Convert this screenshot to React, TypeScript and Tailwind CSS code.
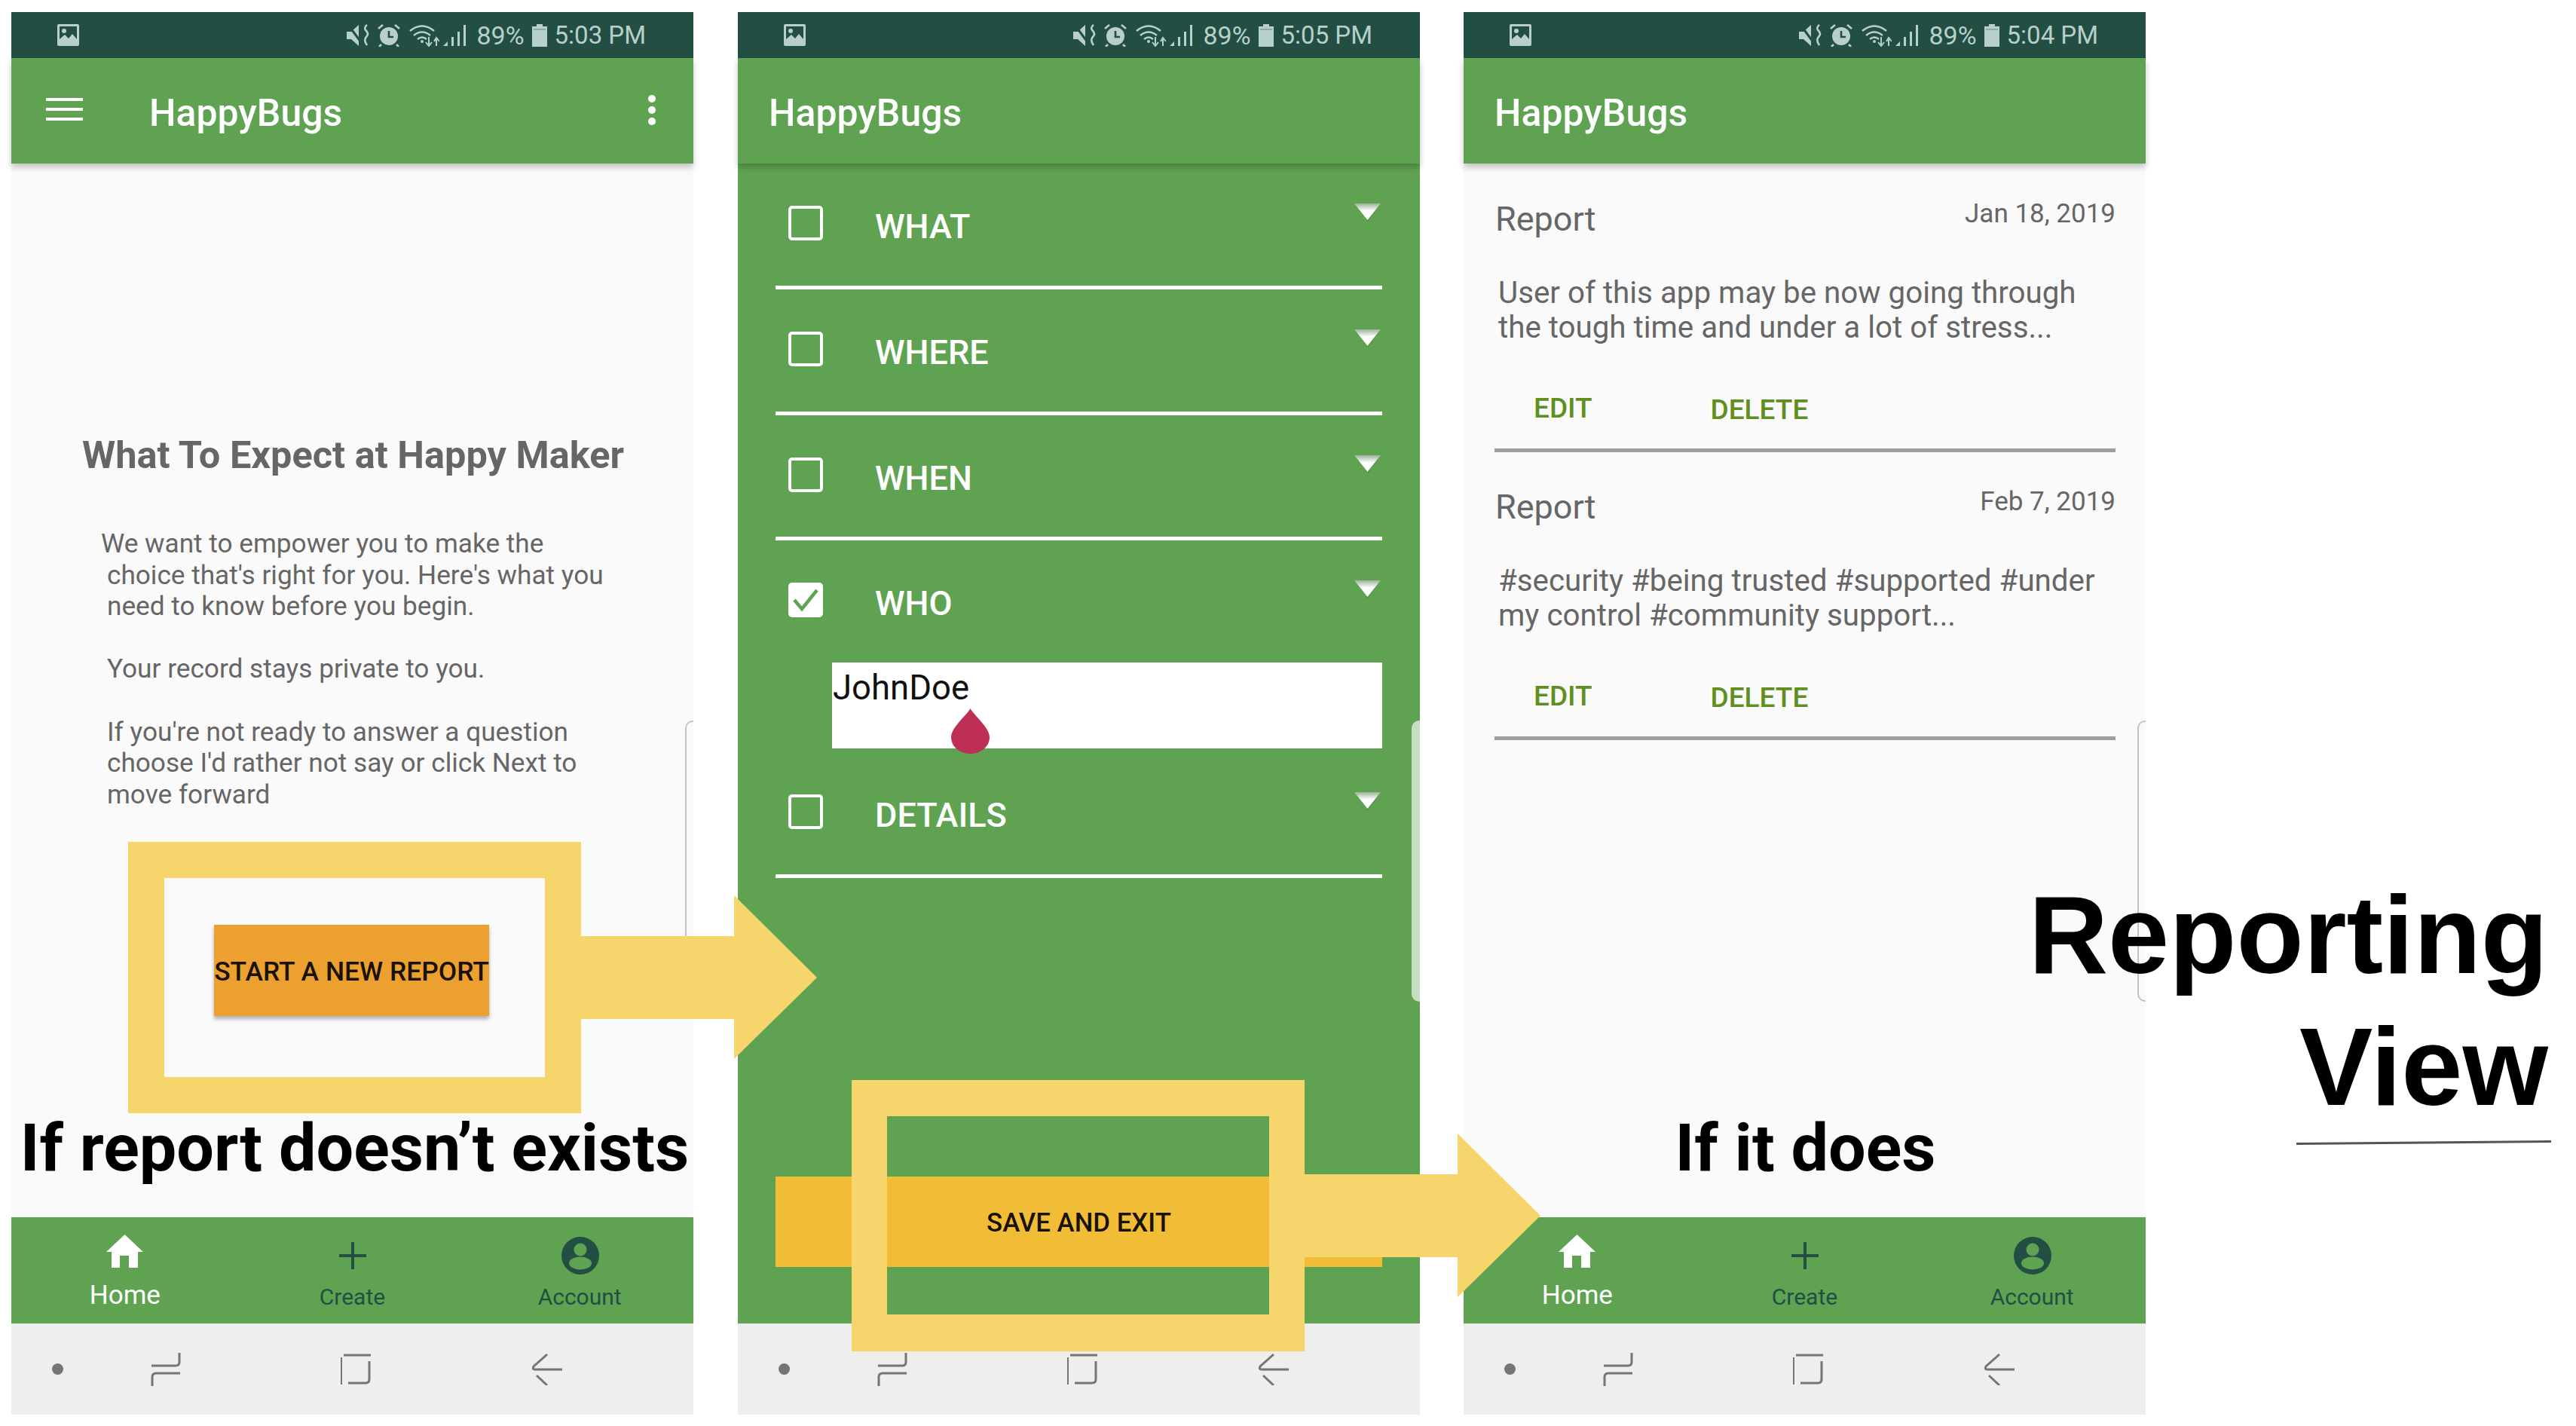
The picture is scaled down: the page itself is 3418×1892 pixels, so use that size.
import type { ReactNode } from 'react';

const GREEN = 'bg-[#5FA352]';

function PictureIcon() {
  return (
    <svg width="29" height="29" viewBox="0 0 29 29">
      <rect width="29" height="29" rx="2" fill="#B9CFCA" />
      <rect x="3" y="3" width="23" height="23" fill="#224E44" />
      <circle cx="9" cy="9" r="3" fill="#B9CFCA" />
      <path d="M3 26 V20 L10 14 L15 19 L20 13 L26 20 V26 Z" fill="#B9CFCA" />
    </svg>
  );
}

function MuteIcon() {
  return (
    <svg width="31" height="29" viewBox="0 0 31 29">
      <path d="M0 10 H6 L16 1 V29 L6 20 H0 Z" fill="#B9CFCA" />
      <path d="M2 1 L22 28" stroke="#224E44" strokeWidth="3" />
      <path d="M27 1 Q22 5 26 9 Q30 13 26 17 Q22 21 27 28" fill="none" stroke="#B9CFCA" strokeWidth="2.6" />
    </svg>
  );
}

function AlarmIcon() {
  return (
    <svg width="30" height="30" viewBox="0 0 30 30">
      <circle cx="15" cy="16" r="12" fill="#B9CFCA" />
      <path d="M15 9 V17 H21" fill="none" stroke="#224E44" strokeWidth="2.6" />
      <path d="M1 6 L7 1 M29 6 L23 1 M5 27 L2 30 M25 27 L28 30" stroke="#B9CFCA" strokeWidth="2.6" />
    </svg>
  );
}

function WifiIcon() {
  return (
    <svg width="40" height="30" viewBox="0 0 40 30">
      <path d="M1 9 Q17 -4 33 9 M6 15 Q17 6 28 15 M11 20 Q17 15 23 20" fill="none" stroke="#B9CFCA" strokeWidth="2.6" />
      <circle cx="17" cy="23" r="2" fill="#B9CFCA" />
      <path d="M26 17 V27 M22 24 L26 29 L30 24 M36 29 V20 M33 23 L36 18 L40 23" fill="none" stroke="#B9CFCA" strokeWidth="2" />
    </svg>
  );
}

function SignalIcon() {
  return (
    <svg width="30" height="30" viewBox="0 0 30 30">
      <path d="M0 29 L6 23 V29 Z M11 17 H14 V29 H11 Z M19 10 H22 V29 H19 Z M27 1 H30 V29 H27 Z" fill="#B9CFCA" />
    </svg>
  );
}

function BatteryIcon() {
  return (
    <svg width="20" height="30" viewBox="0 0 20 30">
      <path d="M6 0 H14 V3 H20 V30 H0 V3 H6 Z" fill="#B9CFCA" />
      <rect x="2" y="6" width="16" height="2" fill="#8FA9A3" />
    </svg>
  );
}

function StatusBar({ time }: { time: string }) {
  return (
    <div className="h-[61px] bg-[#224E44] flex items-center pl-[61px] pr-[63px] text-[34px] leading-none text-[#B9CFCA]">
      <PictureIcon />
      <div className="ml-auto flex items-center">
        <MuteIcon />
        <div className="ml-[10px]"><AlarmIcon /></div>
        <div className="ml-[12px]"><WifiIcon /></div>
        <div className="ml-[5px]"><SignalIcon /></div>
        <span className="ml-[14px]">89%</span>
        <div className="ml-[10px]"><BatteryIcon /></div>
        <span className="ml-[10px] text-[33px]">{time}</span>
      </div>
    </div>
  );
}

function AppBar({ menu }: { menu?: boolean }) {
  return (
    <div className={`relative z-10 h-[140px] ${GREEN} flex items-center shadow-[0_5px_8px_rgba(0,0,0,0.22)] ${menu ? 'pl-[46px]' : 'pl-[41px]'}`}>
      {menu && (
        <div className="flex flex-col gap-[9px] w-[49px] mr-[88px] -mt-[4px]">
          <div className="h-[4px] bg-white" />
          <div className="h-[4px] bg-white" />
          <div className="h-[4px] bg-white" />
        </div>
      )}
      <span className="text-[50px] leading-none font-medium text-white mt-[6px]">HappyBugs</span>
      {menu && (
        <div className="ml-auto mr-[50px] flex flex-col gap-[5px] -mt-[3px]">
          <div className="w-[10px] h-[10px] rounded-full bg-white" />
          <div className="w-[10px] h-[10px] rounded-full bg-white" />
          <div className="w-[10px] h-[10px] rounded-full bg-white" />
        </div>
      )}
    </div>
  );
}

function BottomNav() {
  return (
    <div className={`h-[141px] ${GREEN} grid grid-cols-3 pt-[26px]`}>
      <div className="flex flex-col items-center text-white">
        <div className="h-[50px] flex items-start">
          <svg width="49" height="44" viewBox="0 0 49 44" className="-mt-[3px]">
            <path d="M24.5 0 L49 23 H42 V44 H30 V28 H18 V44 H7 V23 H0 Z" fill="white" />
          </svg>
        </div>
        <span className="text-[35px] leading-[40px] mt-[8px]">Home</span>
      </div>
      <div className="flex flex-col items-center text-[#224E44]">
        <div className="h-[50px] flex items-center">
          <svg width="36" height="36" viewBox="0 0 36 36" className="ml-[2px]">
            <path d="M18 0 V36 M0 18 H36" stroke="#224E44" strokeWidth="4" />
          </svg>
        </div>
        <span className="text-[30px] leading-[40px] mt-[10px]">Create</span>
      </div>
      <div className="flex flex-col items-center text-[#224E44]">
        <svg width="50" height="50" viewBox="0 0 50 50" className="ml-[2px]">
          <circle cx="25" cy="25" r="25" fill="#224E44" />
          <circle cx="25" cy="17" r="8.5" fill="#5FA352" />
          <ellipse cx="25" cy="35" rx="15" ry="8.5" fill="#5FA352" />
        </svg>
        <span className="text-[30px] leading-[40px] mt-[10px]">Account</span>
      </div>
    </div>
  );
}

function NavBar() {
  return (
    <div className="h-[121px] bg-[#EEEEEE] flex items-center">
      <div className="ml-[54px] w-[15px] h-[15px] rounded-full bg-[#757575]" />
      <svg width="40" height="44" viewBox="0 0 40 44" fill="none" stroke="#757575" strokeWidth="3" className="ml-[116px]">
        <path d="M38 0 V12 Q38 17 33 17 H1" />
        <path d="M39 27 H7 Q2 27 2 32 V44" />
      </svg>
      <svg width="40" height="42" viewBox="0 0 40 42" fill="none" stroke="#757575" strokeWidth="3" className="ml-[212px]">
        <path d="M1 5 V41" strokeWidth="2" />
        <path d="M4 2 H40" />
        <path d="M38 10 V34 Q38 39 33 39 H10" />
      </svg>
      <svg width="40" height="42" viewBox="0 0 40 42" fill="none" stroke="#757575" strokeWidth="3" className="ml-[214px]">
        <path d="M20 1 L2 17 Q0 21 4 21 H40" />
        <path d="M6 29 L20 42" />
      </svg>
    </div>
  );
}

function EdgeHandle({ tint, short }: { tint?: boolean; short?: boolean }) {
  return (
    <div
      className={`absolute right-0 top-[739px] w-[11px] ${short ? 'h-[300px] rounded-tl-[10px] border-b-0' : 'h-[373px] rounded-l-[10px]'} ${
        tint ? 'bg-[#C5DDC0]' : 'border-l-2 border-t-2 border-[#C4C4C4]'
      } ${!tint && !short ? 'border-b-2' : ''}`}
    />
  );
}

function Phone({ time, menu, nav, children }: { time: string; menu?: boolean; nav?: boolean; children: ReactNode }) {
  return (
    <div className="w-[905px] h-[1861px] flex flex-col shrink-0">
      <StatusBar time={time} />
      <AppBar menu={menu} />
      {children}
      {nav && <BottomNav />}
      <NavBar />
    </div>
  );
}

function Intro() {
  return (
    <div className="relative flex-1 bg-[#FAFAFA] text-[#666666] pt-[363px]">
      <h1 className="ml-[94px] text-[50.5px] leading-[48px] font-bold">What To Expect at Happy Maker</h1>
      <div className="mt-[73px] text-[35.2px] leading-[41.6px]">
        <p className="ml-[119px]">We want to empower you to make the</p>
        <p className="ml-[127px]">choice that's right for you. Here's what you</p>
        <p className="ml-[127px]">need to know before you begin.</p>
        <p className="ml-[127px] mt-[41.6px]">Your record stays private to you.</p>
        <p className="ml-[127px] mt-[41.6px]">If you're not ready to answer a question</p>
        <p className="ml-[127px]">choose I'd rather not say or click Next to</p>
        <p className="ml-[127px]">move forward</p>
      </div>
      <button className="block ml-[269px] mt-[152px] w-[365px] h-[121px] pt-[4px] bg-[#ECA02F] shadow-[0_4px_5px_rgba(0,0,0,0.3)] text-[35.4px] leading-none font-medium text-[#1A1209] whitespace-nowrap">
        START A NEW REPORT
      </button>
      <EdgeHandle short />
    </div>
  );
}

function Triangle() {
  return (
    <svg width="39" height="28" viewBox="0 0 39 28" className="block">
      <defs>
        <linearGradient id="tri" x1="0" y1="0" x2="0" y2="1">
          <stop offset="0" stopColor="#9DB39A" />
          <stop offset="0.45" stopColor="#FFFFFF" />
          <stop offset="1" stopColor="#FFFFFF" />
        </linearGradient>
      </defs>
      <path d="M4 3 L20 25 L36 3 Z" fill="#3E7A35" opacity="0.45" />
      <path d="M2 1 L19.5 23 L37 1 Z" fill="url(#tri)" />
    </svg>
  );
}

function CheckRow({ label, checked }: { label: string; checked?: boolean }) {
  return (
    <div className="flex items-start pt-[52px] h-[162px]">
      <div
        className={`ml-[17px] mt-[4px] w-[46px] h-[46px] shrink-0 rounded-[5px] flex items-center justify-center ${
          checked ? 'bg-white' : 'border-[4px] border-white'
        }`}
      >
        {checked && (
          <svg width="36" height="32" viewBox="0 0 36 32" fill="none" stroke="#5FA352" strokeWidth="4.5">
            <path d="M3 16 L13 28 L33 3" />
          </svg>
        )}
      </div>
      <span className="ml-[69px] mt-[9px] text-[45px] leading-[46px] font-medium text-white">{label}</span>
      <div className="ml-auto">
        <Triangle />
      </div>
    </div>
  );
}

function ReportForm() {
  return (
    <div className={`relative flex-1 ${GREEN} px-[50px]`}>
      <div className="h-[167px] border-b-[5px] border-white">
        <CheckRow label="WHAT" />
      </div>
      <div className="h-[167px] border-b-[5px] border-white">
        <CheckRow label="WHERE" />
      </div>
      <div className="h-[166px] border-b-[5px] border-white">
        <CheckRow label="WHEN" />
      </div>
      <div className="h-[281px]">
        <CheckRow label="WHO" checked />
        <div className="relative ml-[75px] h-[114px] bg-white text-[45.5px] leading-[52px] text-[#111111] pt-[8px]">
          <span className="ml-[1px]">JohnDoe</span>
          <svg width="51" height="60" viewBox="0 0 51 60" className="absolute left-[158px] top-[61px]">
            <path d="M25.5 0 C31 10 51 25 51 38 C51 51 39 60 25.5 60 C12 60 0 51 0 38 C0 25 20 10 25.5 0 Z" fill="#BE2F55" />
          </svg>
        </div>
      </div>
      <div className="h-[167px] border-b-[5px] border-white">
        <CheckRow label="DETAILS" />
      </div>
      <button className="block mt-[396px] w-[805px] h-[120px] pt-[2px] bg-[#F2BD36] text-[34.8px] leading-none font-medium text-[#1A1209]">
        SAVE AND EXIT
      </button>
      <EdgeHandle tint />
    </div>
  );
}

const reports = [
  {
    date: 'Jan 18, 2019',
    lines: ['User of this app may be now going through', 'the tough time and under a lot of stress...'],
  },
  {
    date: 'Feb 7, 2019',
    lines: ['#security #being trusted #supported #under', 'my control #community support...'],
  },
];

function ReportList() {
  return (
    <div className="relative flex-1 bg-[#FAFAFA] text-[#666666] pl-[41px] pr-[40px] pt-[1px]">
      {reports.map((r) => (
        <div key={r.date} className="h-[382px] pt-[49px] border-b-[5px] border-[#9E9E9E]">
          <div className="flex justify-between items-start">
            <span className="ml-[1px] mt-[2px] text-[45px] leading-[44px]">Report</span>
            <span className="text-[35px] leading-[34px]">{r.date}</span>
          </div>
          <div className="ml-[5px] mt-[53px] text-[40.3px] leading-[46px]">
            <p>{r.lines[0]}</p>
            <p>{r.lines[1]}</p>
          </div>
          <div className="flex items-start mt-[66px] text-[37px] leading-[36px] font-medium text-[#5F8F1F]">
            <span className="ml-[52px]">EDIT</span>
            <span className="ml-[157px] mt-[2px]">DELETE</span>
          </div>
        </div>
      ))}
      <EdgeHandle />
    </div>
  );
}

function Arrow({ className }: { className: string }) {
  return (
    <svg width="313" height="217" viewBox="0 0 313 217" className={`absolute z-20 ${className}`}>
      <path d="M0 54 H203 V0 L313 109 L203 217 V164 H0 Z" fill="#F7D56D" />
    </svg>
  );
}

export default function App() {
  return (
    <div className="relative w-[3418px] h-[1892px] bg-white overflow-hidden font-['Roboto',sans-serif]">
      <div className="flex pt-[16px] pl-[15px]">
        <Phone time="5:03 PM" menu nav>
          <Intro />
        </Phone>
        <div className="ml-[59px]">
          <Phone time="5:05 PM">
            <ReportForm />
          </Phone>
        </div>
        <div className="ml-[58px]">
          <Phone time="5:04 PM" nav>
            <ReportList />
          </Phone>
        </div>
      </div>

      {/* annotations drawn over the screenshots */}
      <div className="absolute z-20 left-[170px] top-[1117px] w-[601px] h-[360px] border-[48px] border-[#F7D56D]" />
      <Arrow className="left-[771px] top-[1188px]" />
      <div className="absolute z-20 left-[1130px] top-[1433px] w-[601px] h-[360px] border-[47px] border-x-[47px] border-t-[48px] border-b-[49px] border-[#F7D56D]" />
      <Arrow className="left-[1731px] top-[1504px]" />

      <div className="absolute z-30 left-[18px] w-[905px] top-[1472px] text-center text-[88px] leading-[102px] font-bold text-black whitespace-nowrap">
        If report doesn’t exists
      </div>
      <div className="absolute z-30 left-[1943px] w-[905px] top-[1472px] text-center text-[88px] leading-[102px] font-bold text-black">
        If it does
      </div>

      <div className="absolute z-30 right-[37px] top-[1153px] text-right text-[146px] leading-[175px] font-bold text-black font-['Liberation_Sans',sans-serif]">
        <div>Reporting</div>
        <div>View</div>
      </div>
      <svg width="340" height="6" viewBox="0 0 340 6" className="absolute z-30 left-[3047px] top-[1513px]">
        <path d="M0 4.5 L338 1.5" stroke="#555555" strokeWidth="3" />
      </svg>
    </div>
  );
}
